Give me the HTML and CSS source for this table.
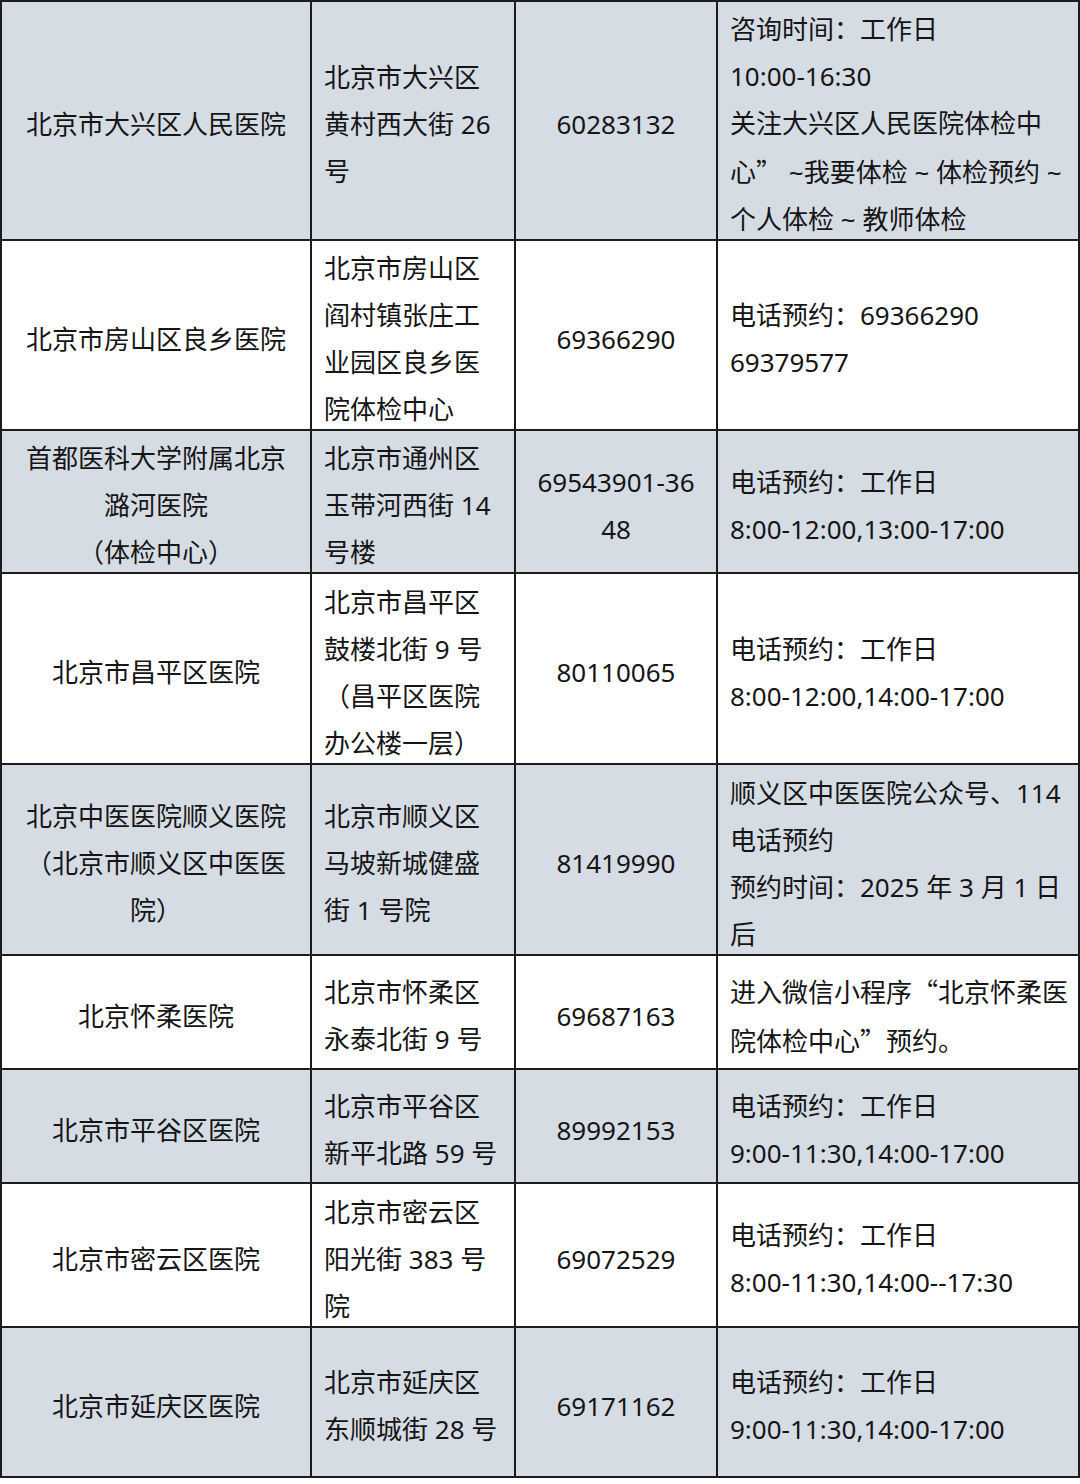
FILE: index.html
```html
<!DOCTYPE html>
<html lang="zh-CN">
<head>
<meta charset="utf-8">
<title>体检医院列表</title>
<link rel="stylesheet" href="styles.css">
</head>
<body>
<table class="grid">
  <colgroup>
    <col class="c-name">
    <col class="c-addr">
    <col class="c-tel">
    <col class="c-note">
  </colgroup>
  <tbody>
    <tr class="shade h1">
      <td class="name"><span class="t">北京市大兴区人民医院</span></td>
      <td class="addr"><span class="t">北京市大兴区<br>黄村西大街 26<br>号</span></td>
      <td class="tel"><span class="t">60283132</span></td>
      <td class="note"><span class="t">咨询时间：工作日<br>10:00-16:30<br>关注大兴区人民医院体检中<br>心<span class="cjk">”</span> ~我要体检 ~ 体检预约 ~<br>个人体检 ~ 教师体检</span></td>
    </tr>
    <tr class="h2">
      <td class="name"><span class="t">北京市房山区良乡医院</span></td>
      <td class="addr"><span class="t">北京市房山区<br>阎村镇张庄工<br>业园区良乡医<br>院体检中心</span></td>
      <td class="tel"><span class="t">69366290</span></td>
      <td class="note"><span class="t">电话预约：69366290<br>69379577</span></td>
    </tr>
    <tr class="shade h3">
      <td class="name"><span class="t">首都医科大学附属北京<br>潞河医院<br>（体检中心）</span></td>
      <td class="addr"><span class="t">北京市通州区<br>玉带河西街 14<br>号楼</span></td>
      <td class="tel"><span class="t">69543901-36<br>48</span></td>
      <td class="note"><span class="t">电话预约：工作日<br>8:00-12:00,13:00-17:00</span></td>
    </tr>
    <tr class="h4">
      <td class="name"><span class="t">北京市昌平区医院</span></td>
      <td class="addr"><span class="t">北京市昌平区<br>鼓楼北街 9 号<br>（昌平区医院<br>办公楼一层）</span></td>
      <td class="tel"><span class="t">80110065</span></td>
      <td class="note"><span class="t">电话预约：工作日<br>8:00-12:00,14:00-17:00</span></td>
    </tr>
    <tr class="shade h5">
      <td class="name"><span class="t">北京中医医院顺义医院<br>（北京市顺义区中医医<br>院）</span></td>
      <td class="addr"><span class="t">北京市顺义区<br>马坡新城健盛<br>街 1 号院</span></td>
      <td class="tel"><span class="t">81419990</span></td>
      <td class="note"><span class="t">顺义区中医医院公众号、114<br>电话预约<br>预约时间：2025 年 3 月 1 日<br>后</span></td>
    </tr>
    <tr class="h6">
      <td class="name"><span class="t">北京怀柔医院</span></td>
      <td class="addr"><span class="t">北京市怀柔区<br>永泰北街 9 号</span></td>
      <td class="tel"><span class="t">69687163</span></td>
      <td class="note"><span class="t">进入微信小程序<span class="cjk">“</span>北京怀柔医<br>院体检中心<span class="cjk">”</span>预约。</span></td>
    </tr>
    <tr class="shade h7">
      <td class="name"><span class="t">北京市平谷区医院</span></td>
      <td class="addr"><span class="t">北京市平谷区<br>新平北路 59 号</span></td>
      <td class="tel"><span class="t">89992153</span></td>
      <td class="note"><span class="t">电话预约：工作日<br>9:00-11:30,14:00-17:00</span></td>
    </tr>
    <tr class="h8">
      <td class="name"><span class="t">北京市密云区医院</span></td>
      <td class="addr"><span class="t">北京市密云区<br>阳光街 383 号<br>院</span></td>
      <td class="tel"><span class="t">69072529</span></td>
      <td class="note"><span class="t">电话预约：工作日<br>8:00-11:30,14:00--17:30</span></td>
    </tr>
    <tr class="shade h9">
      <td class="name"><span class="t">北京市延庆区医院</span></td>
      <td class="addr"><span class="t">北京市延庆区<br>东顺城街 28 号</span></td>
      <td class="tel"><span class="t">69171162</span></td>
      <td class="note"><span class="t">电话预约：工作日<br>9:00-11:30,14:00-17:00</span></td>
    </tr>
  </tbody>
</table>
</body>
</html>
```

FILE: styles.css
```css
html, body {
  margin: 0;
  padding: 0;
  background: #ffffff;
}

body {
  font-family: "Noto Sans", "Noto Sans CJK SC", sans-serif;
  font-size: 26px;
  line-height: 47px;
  color: #151515;
}

.grid {
  width: 1078px;
  table-layout: fixed;
  border-collapse: collapse;
  border: 2px solid #1c1c1c;
}

.c-name { width: 310px; }
.c-addr { width: 204px; }
.c-tel { width: 202px; }
.c-note { width: 362px; }

.grid td {
  border: 2px solid #1c1c1c;
  padding: 0 0 0 12px;
  vertical-align: middle;
  white-space: nowrap;
  overflow: visible;
}

.grid td .t {
  display: block;
  margin: 4px 0 -4px;
}

.grid tr.shade td {
  background: #d6dce4;
}

.grid td.name,
.grid td.tel {
  text-align: center;
  padding-left: 0;
}

.cjk {
  font-family: "Noto Sans CJK SC", sans-serif;
}

.h1 { height: 238px; }
.h2 { height: 190px; }
.h3 { height: 142px; }
.h4 { height: 191px; }
.h5 { height: 191px; }
.h6 { height: 114px; }
.h7 { height: 114px; }
.h8 { height: 144px; }
.h9 { height: 150px; }
```
